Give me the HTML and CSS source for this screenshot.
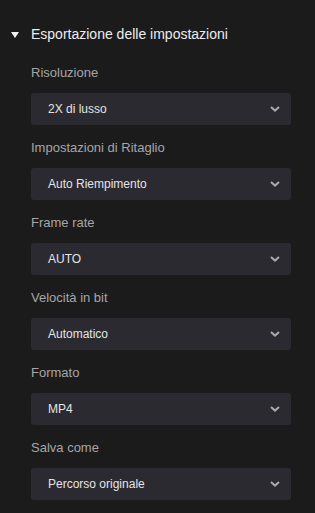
FILE: index.html
```html
<!DOCTYPE html>
<html lang="it">
<head>
<meta charset="utf-8">
<link rel="stylesheet" href="styles.css">
</head>
<body>
<div class="panel">
  <div class="section-head">
    <span class="caret"></span>
    <span class="section-title">Esportazione delle impostazioni</span>
  </div>
  <div class="fields">
    <div class="field">
      <div class="label">Risoluzione</div>
      <div class="select"><span>2X di lusso</span><svg class="chev" width="10" height="6" viewBox="0 0 10 6"><path d="M1 1 L5 4.6 L9 1" fill="none" stroke="#a9a9ad" stroke-width="2"/></svg></div>
    </div>
    <div class="field">
      <div class="label">Impostazioni di Ritaglio</div>
      <div class="select"><span>Auto Riempimento</span><svg class="chev" width="10" height="6" viewBox="0 0 10 6"><path d="M1 1 L5 4.6 L9 1" fill="none" stroke="#a9a9ad" stroke-width="2"/></svg></div>
    </div>
    <div class="field">
      <div class="label">Frame rate</div>
      <div class="select"><span>AUTO</span><svg class="chev" width="10" height="6" viewBox="0 0 10 6"><path d="M1 1 L5 4.6 L9 1" fill="none" stroke="#a9a9ad" stroke-width="2"/></svg></div>
    </div>
    <div class="field">
      <div class="label">Velocità in bit</div>
      <div class="select"><span>Automatico</span><svg class="chev" width="10" height="6" viewBox="0 0 10 6"><path d="M1 1 L5 4.6 L9 1" fill="none" stroke="#a9a9ad" stroke-width="2"/></svg></div>
    </div>
    <div class="field">
      <div class="label">Formato</div>
      <div class="select"><span>MP4</span><svg class="chev" width="10" height="6" viewBox="0 0 10 6"><path d="M1 1 L5 4.6 L9 1" fill="none" stroke="#a9a9ad" stroke-width="2"/></svg></div>
    </div>
    <div class="field">
      <div class="label">Salva come</div>
      <div class="select"><span>Percorso originale</span><svg class="chev" width="10" height="6" viewBox="0 0 10 6"><path d="M1 1 L5 4.6 L9 1" fill="none" stroke="#a9a9ad" stroke-width="2"/></svg></div>
    </div>
  </div>
</div>
</body>
</html>
```
FILE: styles.css
```css
html, body {
  margin: 0;
  padding: 0;
  background: #1b1b1c;
  height: 100%;
}
body {
  font-family: "Liberation Sans", Arial, sans-serif;
  overflow: hidden;
}
.panel {
  padding-top: 24px;
}
.section-head {
  display: flex;
  align-items: center;
  height: 20px;
  padding-left: 11px;
}
.caret {
  width: 0;
  height: 0;
  border-left: 4px solid transparent;
  border-right: 4px solid transparent;
  border-top: 6px solid #f2f2f2;
  margin-right: 12px;
  margin-top: 1px;
}
.section-title {
  color: #ececec;
  font-size: 14px;
  line-height: 20px;
}
.fields {
  display: flex;
  flex-direction: column;
  gap: 15px;
  padding: 21px 24px 0 31px;
}
.field {
  display: flex;
  flex-direction: column;
  gap: 12px;
}
.label {
  color: #a6a6a8;
  font-size: 13px;
  line-height: 16px;
  height: 16px;
}
.select {
  display: flex;
  align-items: center;
  justify-content: space-between;
  height: 32px;
  box-sizing: border-box;
  padding: 0 11px 0 17px;
  background: #2b2a30;
  border-radius: 3px;
  color: #e4e4e6;
  font-size: 12px;
}
.chev {
  display: block;
}
```
